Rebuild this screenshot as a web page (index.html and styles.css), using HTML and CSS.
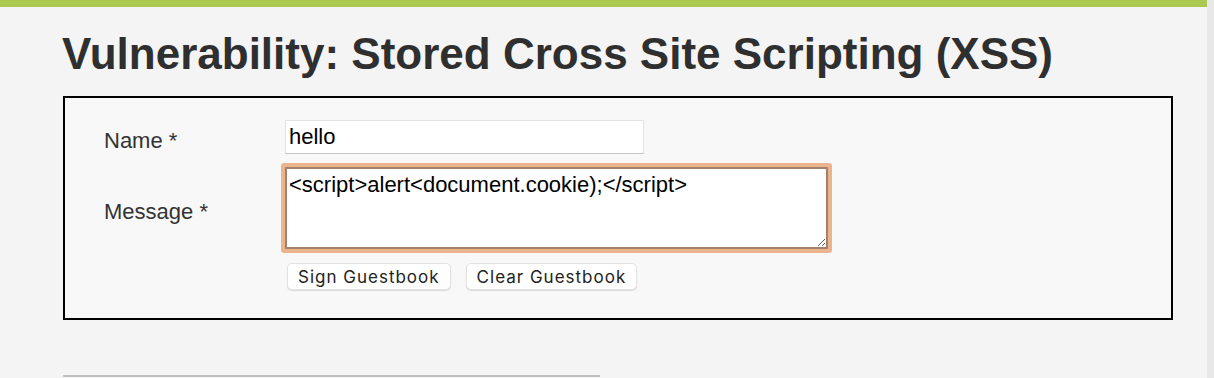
FILE: index.html
```html
<!DOCTYPE html>
<html lang="en">
<head>
  <meta charset="UTF-8">
  <title>Vulnerability: Stored Cross Site Scripting (XSS)</title>
  <meta name="viewport" content="width=device-width, initial-scale=1">
  <link rel="stylesheet" href="styles.css">
</head>
<body>

  <div class="page">
    <!-- top accent bar -->
    <div class="topbar"></div>

    <div class="main">
      <h1 class="title">Vulnerability: Stored Cross Site Scripting (XSS)</h1>

      <!-- guestbook form -->
      <form class="vulnerable-box" onsubmit="return false">
        <label class="field-label" for="txtName">Name *</label>
        <input class="txt-name" id="txtName" type="text" value="hello">

        <label class="field-label" for="mtxMessage">Message *</label>
        <textarea class="txt-message" id="mtxMessage">&lt;script&gt;alert&lt;document.cookie);&lt;/script&gt;</textarea>

        <div class="buttons">
          <button class="btn" type="submit">Sign Guestbook</button>
          <button class="btn" type="button">Clear Guestbook</button>
        </div>
      </form>

      <div class="divider"></div>
    </div>
  </div>

  <!-- scrollbar track on the right -->
  <div class="gutter"></div>

</body>
</html>
```

FILE: styles.css
```css
/* page base */
html, body {
  height: 100%;
}

body {
  margin: 0;
  display: flex;
  background: #f4f4f4;
  font-family: 'Liberation Sans', Arial, sans-serif;
  color: #333;
  overflow: hidden;
}

.page {
  flex: 1;
  min-width: 0;
}

.gutter {
  width: 7px;
  background: #e8e8e8;
}

/* green stripe at the very top */
.topbar {
  height: 7px;
  background: #abc951;
}

.main {
  padding-left: 63px;
}

/* heading */
.title {
  margin: 22px 0 17px -1px;
  font-size: 44px;
  line-height: 50px;
  font-weight: bold;
  color: #2f2f2f;
}

/* bordered form box */
.vulnerable-box {
  width: 1110px;
  box-sizing: border-box;
  border: 2px solid #000;
  background: #f7f8f7;
  padding: 22px 0 28px 39px;
  display: grid;
  grid-template-columns: 181px auto;
  row-gap: 13px;
  align-items: center;
  justify-items: start;
}

.field-label {
  margin-top: 7px;
  font-size: 22px;
  color: #333;
}

.txt-name {
  width: 359px;
  height: 34px;
  box-sizing: border-box;
  margin: 0;
  padding: 2px 3px;
  border: 1px solid #e3e3e3;
  border-bottom-color: #c6c6c6;
  background: #fff;
  font-family: 'Liberation Sans', Arial, sans-serif;
  font-size: 22px;
  color: #000;
  outline: none;
}

.txt-message {
  width: 543px;
  height: 82px;
  box-sizing: border-box;
  margin: 0;
  padding: 3px 2px 1px;
  border: 2px solid #a2826d;
  border-radius: 1px;
  box-shadow: 0 0 0 4px #ebb48c;
  background: #fff;
  font-family: 'Liberation Sans', Arial, sans-serif;
  font-size: 22px;
  line-height: 25px;
  color: #000;
  outline: none;
}

.buttons {
  grid-column: 2;
  display: flex;
  gap: 15px;
  margin: 1px 0 0 2px;
}

.btn {
  height: 27px;
  padding: 0 10px;
  border: 1px solid #e2e2e2;
  border-radius: 5px;
  background: #fff;
  box-shadow: 0 1px 1px rgba(0,0,0,0.12);
  font-family: 'Inter', sans-serif;
  font-size: 17px;
  letter-spacing: 1px;
  color: #222;
  cursor: pointer;
}

/* thin grey rule below the box */
.divider {
  width: 537px;
  height: 2px;
  margin-top: 55px;
  background: #c0c0c0;
}
```
